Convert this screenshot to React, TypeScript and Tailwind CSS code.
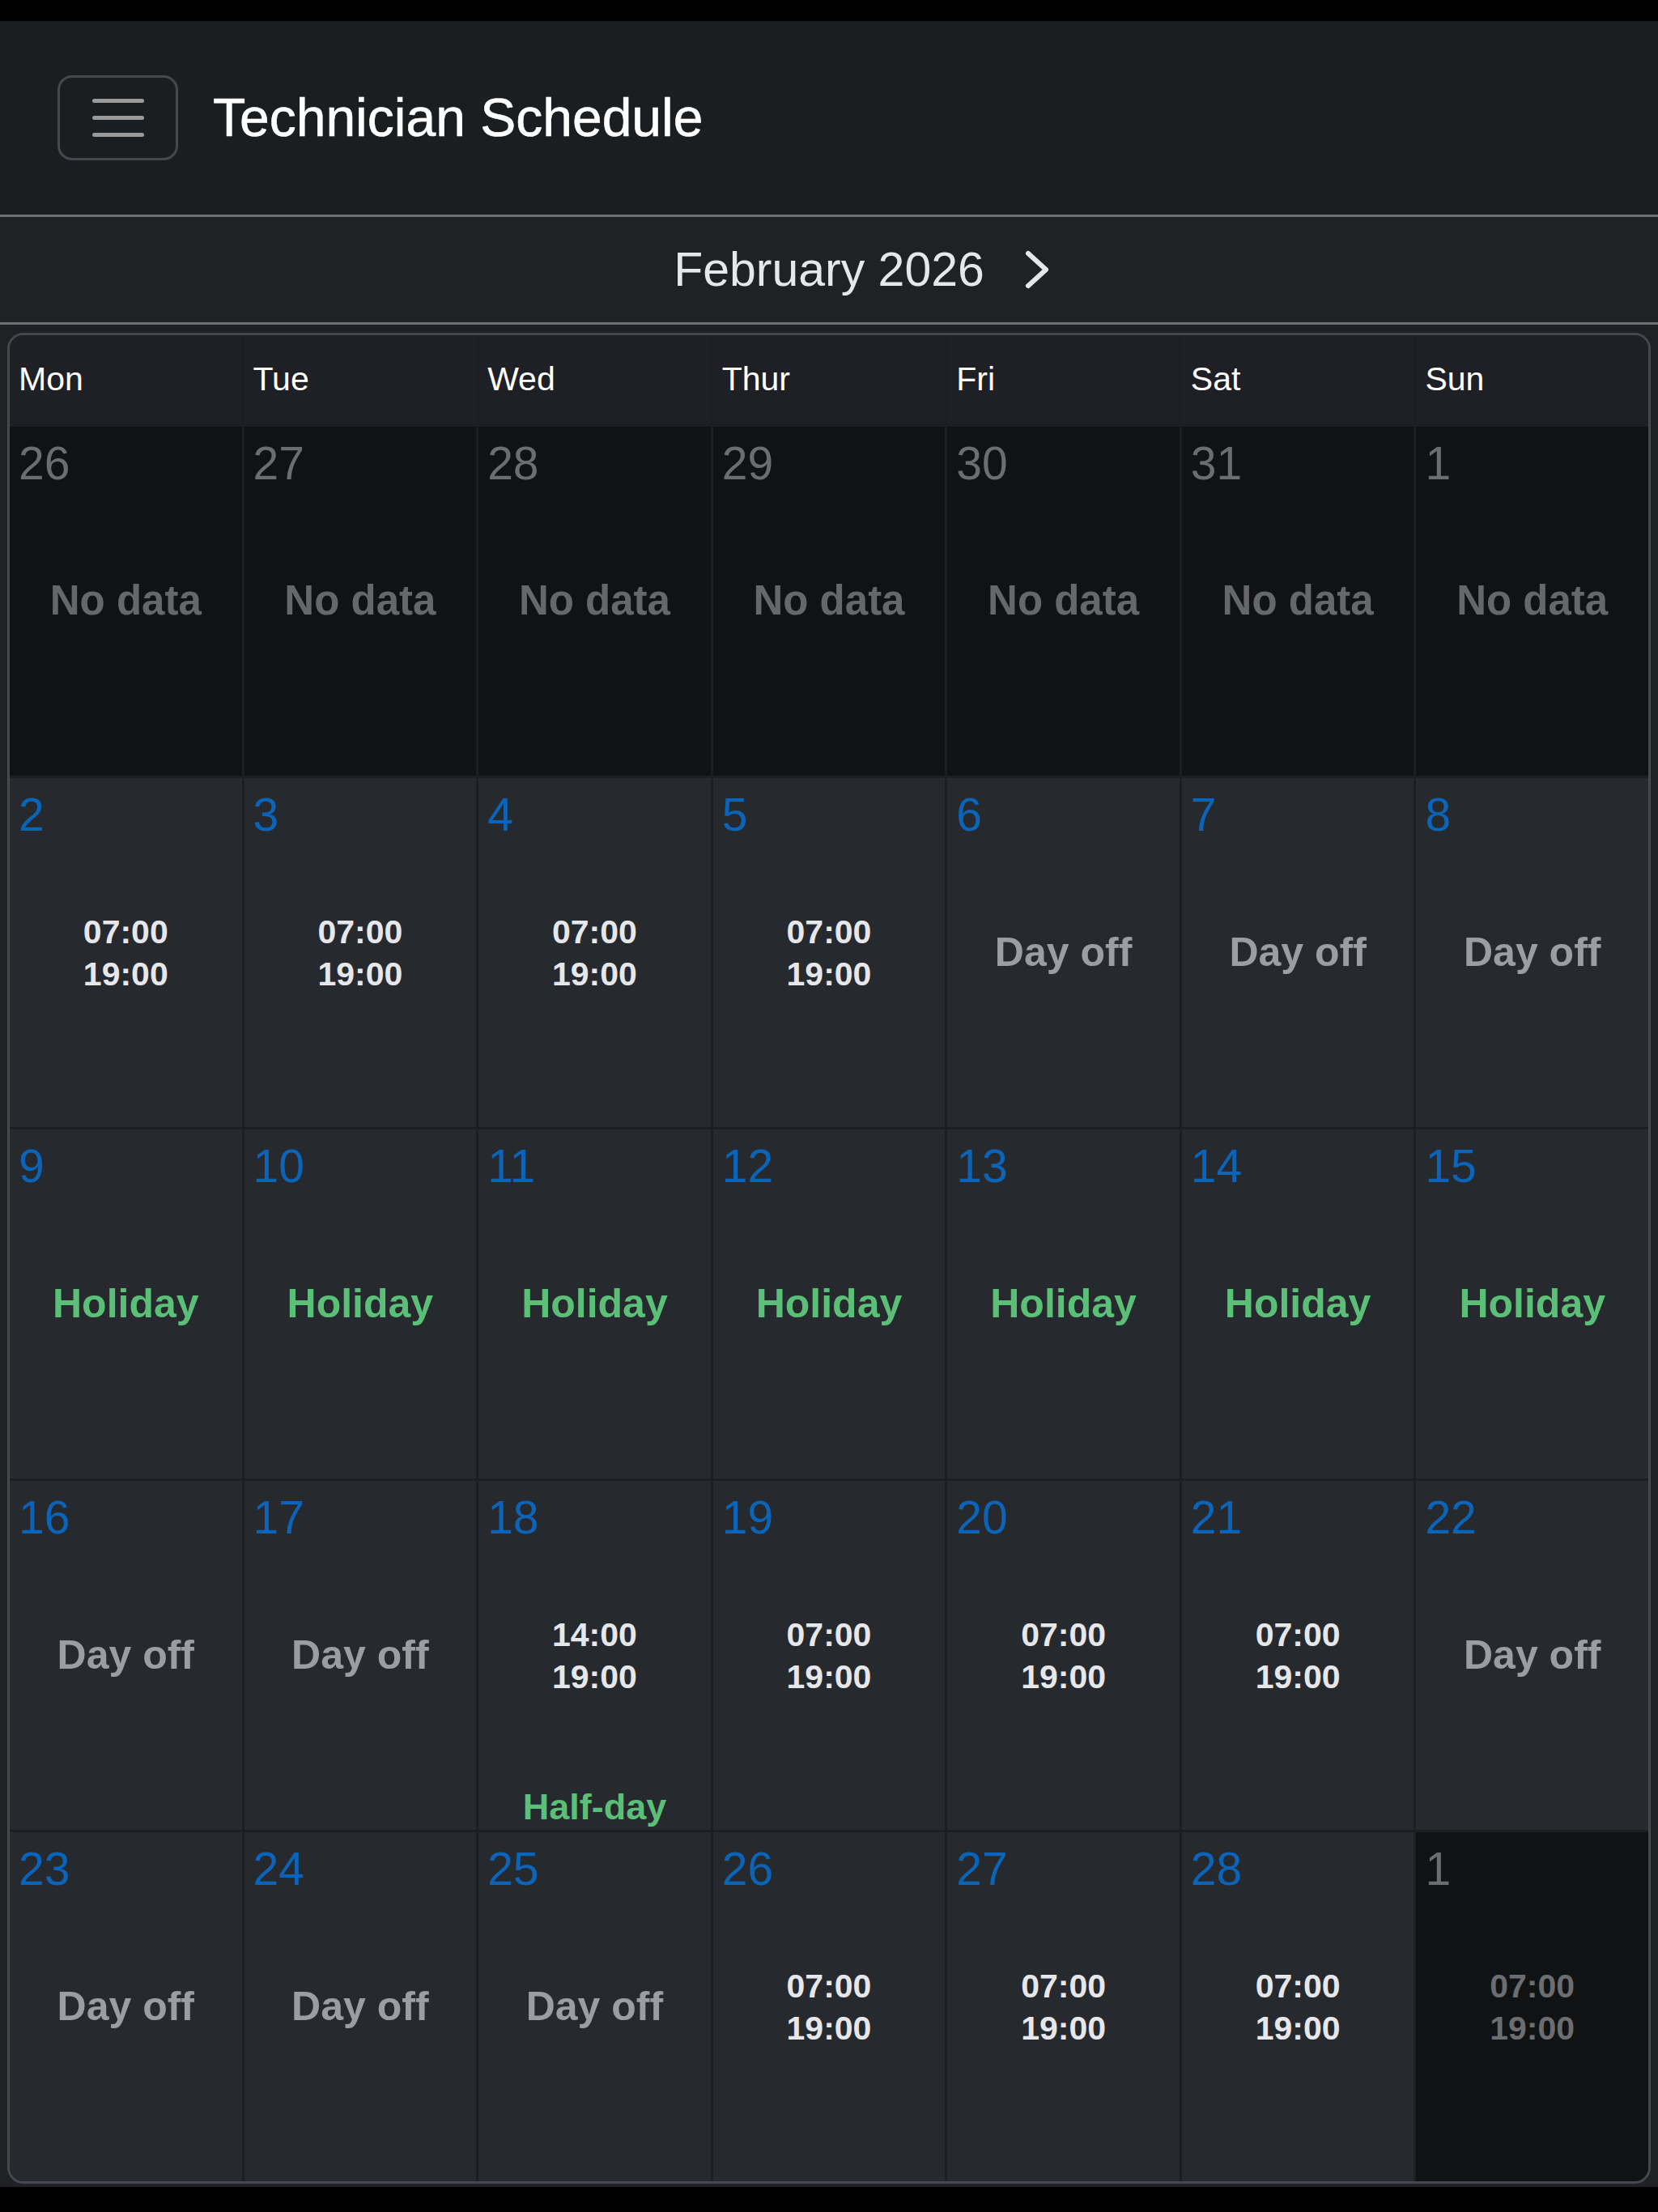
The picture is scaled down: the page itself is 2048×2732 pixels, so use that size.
import React from "react";

type Day = {
  n: number;
  muted?: boolean;
  kind: "none" | "shift" | "off" | "holiday";
  start?: string;
  end?: string;
  note?: string;
};

const WEEKDAYS = ["Mon", "Tue", "Wed", "Thur", "Fri", "Sat", "Sun"];

const shift = (n: number, muted = false): Day => ({
  n,
  muted,
  kind: "shift",
  start: "07:00",
  end: "19:00",
});
const off = (n: number): Day => ({ n, kind: "off" });
const holiday = (n: number): Day => ({ n, kind: "holiday" });
const none = (n: number): Day => ({ n, muted: true, kind: "none" });

const DAYS: Day[] = [
  none(26), none(27), none(28), none(29), none(30), none(31), none(1),
  shift(2), shift(3), shift(4), shift(5), off(6), off(7), off(8),
  holiday(9), holiday(10), holiday(11), holiday(12), holiday(13), holiday(14), holiday(15),
  off(16), off(17),
  { n: 18, kind: "shift", start: "14:00", end: "19:00", note: "Half-day" },
  shift(19), shift(20), shift(21), off(22),
  off(23), off(24), off(25), shift(26), shift(27), shift(28), shift(1, true),
];

function DayCell({ day }: { day: Day }) {
  return (
    <div
      className={`flex h-[431px] flex-col ${
        day.muted ? "bg-[#111214]" : "bg-[#26292e]"
      }`}
    >
      <div
        className={`h-[80px] pl-[11px] pt-[13px] text-[57px] leading-[64px] ${
          day.muted ? "text-[#6b6d70]" : "text-[#0b64b8]"
        }`}
      >
        {day.n}
      </div>
      <div className="flex flex-1 flex-col items-center justify-center font-bold">
        {day.kind === "none" && (
          <span className="text-[51px] text-[#666769]">No data</span>
        )}
        {day.kind === "off" && (
          <span className="text-[50px] text-[#9a9ea3]">Day off</span>
        )}
        {day.kind === "holiday" && (
          <span className="text-[50px] text-[#5cbf78]">Holiday</span>
        )}
        {day.kind === "shift" && (
          <div
            className={`flex flex-col items-center text-[41px] leading-[52px] ${
              day.muted ? "text-[#6b6d70]" : "text-[#e6e7ea]"
            }`}
          >
            <span>{day.start}</span>
            <span>{day.end}</span>
          </div>
        )}
      </div>
      <div className="flex h-[80px] items-end justify-center pb-[2px]">
        {day.note && (
          <span className="text-[45px] font-bold leading-[52px] text-[#5cbf78]">
            {day.note}
          </span>
        )}
      </div>
    </div>
  );
}

export default function App() {
  return (
    <div className="flex min-h-[2732px] flex-col bg-black font-['Liberation_Sans',Arial,sans-serif]">
      <div className="h-[26px] bg-black" />

      <header className="flex h-[242px] items-center border-b-[3px] border-[#6c6f73] bg-[#1b1e21] px-[71px]">
        <button className="flex h-[105px] w-[149px] flex-col items-center justify-center gap-[16px] rounded-[18px] border-[3px] border-[#45484d]">
          <span className="h-[5px] w-[64px] rounded-full bg-[#9a9a9a]" />
          <span className="h-[5px] w-[64px] rounded-full bg-[#9a9a9a]" />
          <span className="h-[5px] w-[64px] rounded-full bg-[#9a9a9a]" />
        </button>
        <h1 className="ml-[43px] text-[66px] text-white [-webkit-text-stroke:0.6px_white]">
          Technician Schedule
        </h1>
      </header>

      <div className="flex h-[133px] items-center justify-center gap-[50px] border-b-[3px] border-[#6c6f73] bg-[#1f2125]">
        <span className="invisible w-[31px]" />
        <span className="text-[59px] text-[#e6e7ea]">February 2026</span>
        <svg width="31" height="48" viewBox="0 0 31 48" fill="none">
          <polyline
            points="4,4 26,24 4,44"
            stroke="#e6e7ea"
            strokeWidth="6"
            strokeLinecap="round"
            strokeLinejoin="round"
          />
        </svg>
      </div>

      <main className="bg-[#1f2125] px-[9px] pb-[4px] pt-[10px]">
        <div className="overflow-hidden rounded-[20px] border-[3px] border-[#45484d] bg-[#1c1e22]">
          <div className="grid grid-cols-7 gap-[3px]">
            {WEEKDAYS.map((d) => (
              <div
                key={d}
                className="flex h-[110px] items-center bg-[#1e2025] pl-[11px] text-[41px] text-white"
              >
                {d}
              </div>
            ))}
            {DAYS.map((day, i) => (
              <DayCell key={i} day={day} />
            ))}
          </div>
        </div>
      </main>

      <div className="flex-1 bg-black" />
    </div>
  );
}
